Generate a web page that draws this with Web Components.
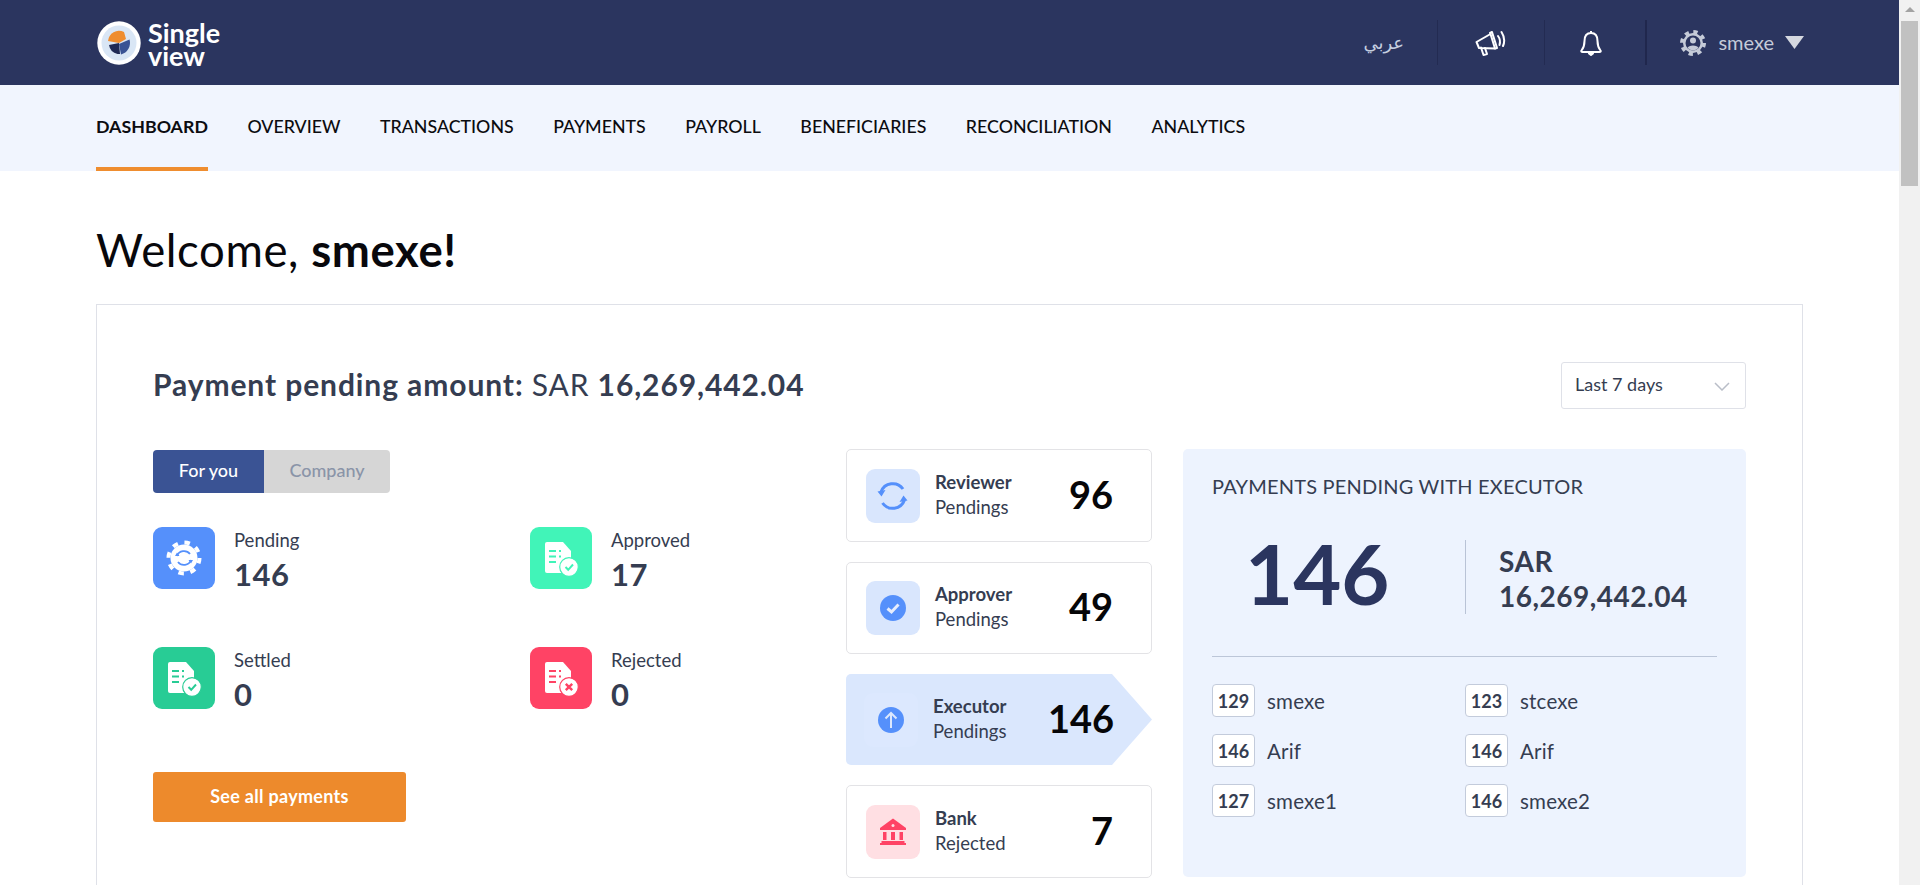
<!DOCTYPE html>
<html lang="en">
<head>
<meta charset="utf-8">
<title>Single view</title>
<style>
  html, body { margin: 0; height: 100%; overflow: hidden; background: #fff; }
  body { font-family: Lato, "Liberation Sans", sans-serif; color: #353d51; }
</style>
</head>
<body>
<sv-page>
  <sv-header slot="header" user="smexe"></sv-header>
  <sv-nav slot="nav" active="DASHBOARD" items="DASHBOARD,OVERVIEW,TRANSACTIONS,PAYMENTS,PAYROLL,BENEFICIARIES,RECONCILIATION,ANALYTICS"></sv-nav>
  <sv-welcome name="smexe!"></sv-welcome>
  <sv-card>
    <sv-summary slot="title" amount="16,269,442.04" period="Last 7 days"></sv-summary>
    <sv-toggle slot="left" on="For you" off="Company"></sv-toggle>
    <div slot="left" style="display:grid;grid-template-columns:377px 1fr;row-gap:58px;margin-top:34px">
      <sv-stat icon="gear" color="#5590fb" label="Pending" value="146"></sv-stat>
      <sv-stat icon="doc-check" color="#41f4b8" label="Approved" value="17"></sv-stat>
      <sv-stat icon="doc-check" color="#28cc95" label="Settled" value="0"></sv-stat>
      <sv-stat icon="doc-cross" color="#ff4365" label="Rejected" value="0"></sv-stat>
    </div>
    <sv-button slot="left" style="margin-top:63px">See all payments</sv-button>

    <sv-role slot="middle" icon="sync" role="Reviewer" sub="Pendings" value="96" style="height:93px"></sv-role>
    <sv-role slot="middle" icon="check" role="Approver" sub="Pendings" value="49" style="height:92px"></sv-role>
    <sv-role slot="middle" icon="up" role="Executor" sub="Pendings" value="146" active style="height:91px"></sv-role>
    <sv-role slot="middle" icon="bank" role="Bank" sub="Rejected" value="7" danger style="height:93px"></sv-role>

    <sv-panel slot="right" heading="PAYMENTS PENDING WITH EXECUTOR" count="146" amount="16,269,442.04">
      <sv-person count="129" name="smexe"></sv-person>
      <sv-person count="123" name="stcexe"></sv-person>
      <sv-person count="146" name="Arif"></sv-person>
      <sv-person count="146" name="Arif"></sv-person>
      <sv-person count="127" name="smexe1"></sv-person>
      <sv-person count="146" name="smexe2"></sv-person>
    </sv-panel>
  </sv-card>
</sv-page>

<script>
const FONT = 'Lato, "Liberation Sans", sans-serif';

class Page extends HTMLElement {
  constructor () {
    super();
    this.attachShadow({ mode: 'open' });
    this.shadowRoot.innerHTML = `
    <style>
      :host { display: flex; height: 885px; overflow: hidden; font-family: ${FONT}; }
      .main { flex: 1; min-width: 0; overflow: hidden; }
      .content { padding: 0 96px; }
      .bar { width: 21px; flex: none; background: #f1f1f1; display: flex; flex-direction: column; align-items: center; }
      .up { width: 0; height: 0; border: 5px solid transparent; border-top: 0; border-bottom-color: #a3a3a3; margin: 7px 0 9px; }
      .thumb { width: 17px; height: 165px; background: #c1c1c1; }
    </style>
    <div class="main">
      <slot name="header"></slot>
      <slot name="nav"></slot>
      <div class="content"><slot></slot></div>
    </div>
    <div class="bar"><div class="up"></div><div class="thumb"></div></div>
    `;
  }
}

class Header extends HTMLElement {
  constructor () {
    super();
    this.attachShadow({ mode: 'open' });
  }

  connectedCallback () {
    this.shadowRoot.innerHTML = `
    <style>
      :host { display: flex; align-items: center; height: 85px; background: #2b355f; padding: 0 95px 0 96px; }
      .logo { display: flex; align-items: center; gap: 6px; flex: 1; }
      .word { color: #fff; font-weight: 700; font-size: 27px; line-height: 23px; margin-top: 3px; }
      .cell { height: 45px; display: flex; align-items: center; justify-content: center; border-right: 1px solid #232b52; }
      .lang { width: 104px; justify-content: flex-start; color: #c5cfe0; font: 18px "DejaVu Sans", sans-serif; }
      .lang span { margin-left: 30px; }
      .cell svg { display: block; }
      .speak { width: 106px; }
      .bell { width: 100px; border-right: 2px solid #20274d; }
      .bell svg { margin-right: 8px; }
      .user { display: flex; align-items: center; padding-left: 33px; color: #c5cbd8; font-size: 20px; }
      .user span { margin: -2px 11px 0 12px; }
    </style>
    <div class="logo">
      <svg width="46" height="46" viewBox="0 0 46 46">
        <circle cx="23" cy="23" r="21.700" fill="#fff"/>
        <circle cx="23" cy="23" r="17.500" fill="#d9e6f5"/>
        <path d="M23 23 L13 25 A11 11 0 0 0 21.500 34 L24 34 Z" fill="#1f2a55"/>
        <path d="M23 23 L12 21 A11 11 0 0 1 28 12 L30 19 Z" fill="#ef8d2f"/>
        <path d="M23 24 L33.500 19.500 A12 12 0 0 1 25 34.500 Z" fill="#3a5394"/>
      </svg>
      <div class="word">Single<br>view</div>
    </div>
    <div class="cell lang"><span lang="ar" dir="rtl">عربي</span></div>
    <div class="cell speak">
      <svg width="32" height="28" viewBox="0 0 32 28" fill="none" stroke="#fff" stroke-width="2" stroke-linejoin="round" stroke-linecap="round">
        <path d="M1.500 13 L4 19 L20 19.500 L15.500 5 Z"/>
        <path d="M6 18.500 L8.500 26 L12 25 L10 19"/>
        <path d="M15 4 L17 3 L22 19 L20 19.500"/>
        <path d="M23 7 Q26 11 24.500 16"/>
        <path d="M26.500 3 Q31 10 28 17"/>
      </svg>
    </div>
    <div class="cell bell">
      <svg width="22" height="26" viewBox="0 0 22 26" fill="none" stroke="#fff" stroke-width="2" stroke-linejoin="round">
        <path d="M11 1 V3 M11 3 C6 3 4.500 7 4.500 11 C4.500 16 3.500 18 1.500 20.500 C1 21.500 1.500 22 2.500 22 H19.500 C20.500 22 21 21.500 20.500 20.500 C18.500 18 17.500 16 17.500 11 C17.500 7 16 3 11 3 Z"/>
        <path d="M9 23.500 H13 L11 25 Z" fill="#fff"/>
      </svg>
    </div>
    <div class="user">
      <svg width="26" height="26" viewBox="0 0 26 26">
        <circle cx="13" cy="13" r="10" fill="#c5cbd8"/>
        <circle cx="13" cy="13" r="11" fill="none" stroke="#c5cbd8" stroke-width="4" stroke-dasharray="4.200 4.440"/>
        <circle cx="13" cy="13" r="7.500" fill="#2b355f"/>
        <circle cx="13" cy="10.500" r="3" fill="#c5cbd8"/>
        <path d="M7.500 18 C8 14.500 18 14.500 18.500 18 A7.500 7.500 0 0 1 7.500 18 Z" fill="#c5cbd8"/>
      </svg>
      <span>${this.getAttribute('user')}</span>
      <svg width="19" height="13" viewBox="0 0 19 13"><path d="M0 0 H19 L9.500 13 Z" fill="#d5d8e0"/></svg>
    </div>
    `;
  }
}

class Nav extends HTMLElement {
  constructor () {
    super();
    this.attachShadow({ mode: 'open' });
  }

  connectedCallback () {
    const active = this.getAttribute('active');
    const links = this.getAttribute('items').split(',')
      .map(item => `<a class="${item === active ? 'on' : ''}">${item}</a>`)
      .join('');
    this.shadowRoot.innerHTML = `
    <style>
      :host { display: flex; gap: 39.500px; height: 86px; background: #f1f5fe; padding-left: 96px; }
      a { display: flex; align-items: center; box-sizing: border-box; height: 86px; padding-bottom: 4px; font-size: 17.800px; font-weight: 500; color: #0c0c10; }
      .on { font-weight: 700; border-bottom: 4px solid #ef8d2f; padding-bottom: 0; }
    </style>
    ${links}
    `;
  }
}

class Welcome extends HTMLElement {
  constructor () {
    super();
    this.attachShadow({ mode: 'open' });
  }

  connectedCallback () {
    this.shadowRoot.innerHTML = `
    <style>
      :host { display: block; padding-top: 52px; height: 81px; font-size: 45.500px; letter-spacing: .6px; line-height: 54px; color: #08080c; font-weight: 400; }
      b { font-weight: 700; }
    </style>
    Welcome, <b>${this.getAttribute('name')}</b>
    `;
  }
}

class Card extends HTMLElement {
  constructor () {
    super();
    this.attachShadow({ mode: 'open' });
    this.shadowRoot.innerHTML = `
    <style>
      :host { display: block; border: 1px solid #dfe1e8; padding: 57px 56px 40px 56px; background: #fff; }
      .cols { display: grid; grid-template-columns: 662px 306px 563px; column-gap: 31px; margin-top: 40px; }
      .left { padding-top: 1px; }
      .middle { display: flex; flex-direction: column; gap: 20px; }
    </style>
    <slot name="title"></slot>
    <div class="cols">
      <div class="left"><slot name="left"></slot></div>
      <div class="middle"><slot name="middle"></slot></div>
      <div><slot name="right"></slot></div>
    </div>
    `;
  }
}

class Summary extends HTMLElement {
  constructor () {
    super();
    this.attachShadow({ mode: 'open' });
  }

  connectedCallback () {
    this.shadowRoot.innerHTML = `
    <style>
      :host { display: flex; justify-content: space-between; align-items: center; height: 47px; }
      h2 { margin: -4px 0 0; font-size: 30px; letter-spacing: .9px; font-weight: 700; color: #353d51; }
      span { font-weight: 400; }
      .select { box-sizing: border-box; width: 185px; height: 47px; border: 1px solid #dfe1e8; border-radius: 3px; display: flex; align-items: center; justify-content: space-between; padding: 0 15px 4px 13px; font-size: 18px; color: #353d51; }
      svg { margin-top: 5px; }
    </style>
    <h2>Payment pending amount: <span>SAR</span> ${this.getAttribute('amount')}</h2>
    <div class="select">${this.getAttribute('period')}
      <svg width="16" height="9" viewBox="0 0 16 9" fill="none" stroke="#b9bec8" stroke-width="1.500"><path d="M1 1 L8 8 L15 1"/></svg>
    </div>
    `;
  }
}

class Toggle extends HTMLElement {
  constructor () {
    super();
    this.attachShadow({ mode: 'open' });
  }

  connectedCallback () {
    this.shadowRoot.innerHTML = `
    <style>
      :host { display: inline-flex; vertical-align: top; height: 43px; font-size: 18px; font-weight: 500; border-radius: 4px; overflow: hidden; }
      div { display: flex; align-items: center; justify-content: center; padding-bottom: 3px; box-sizing: border-box; }
      .on { width: 111px; background: #3a5394; color: #fff; }
      .off { width: 126px; background: #d6d6d6; color: #8a94a8; }
    </style>
    <div class="on">${this.getAttribute('on')}</div>
    <div class="off">${this.getAttribute('off')}</div>
    `;
  }
}

const tileIcons = {
  gear: (c) => `
    <circle cx="31" cy="31" r="13.500" fill="#fff"/>
    <circle cx="31" cy="31" r="15.500" fill="none" stroke="#fff" stroke-width="4" stroke-dasharray="5.500 6.670"/>
    <g fill="none" stroke="${c}" stroke-width="1.800">
      <path d="M24 29 A7.500 7.500 0 0 1 37 27"/>
      <path d="M38 33 A7.500 7.500 0 0 1 25 35"/>
    </g>
    <path d="M22 29 L26.500 29 L24 25.500 Z M40 33 L35.500 33 L38 36.500 Z" fill="${c}"/>`,
  doc: (c) => `
    <path d="M17 15 H33 L41 24 V44 Q41 46 39 46 H17 Q15 46 15 44 V17 Q15 15 17 15 Z" fill="#fff"/>
    <path d="M19 24 H26 M29 24 H31 M19 29.500 H26 M29 29.500 H31 M19 35 H26" stroke="${c}" stroke-width="1.800" fill="none"/>
    <circle cx="39" cy="40" r="9.300" fill="#fff" stroke="${c}" stroke-width="1.200"/>`
};
tileIcons['doc-check'] = (c) => `${tileIcons.doc(c)}
    <circle cx="39" cy="40" r="7.800" fill="#fff"/>
    <path d="M35.500 40 L38.200 42.800 L43 37.500" fill="none" stroke="${c}" stroke-width="2"/>`;
tileIcons['doc-cross'] = (c) => `${tileIcons.doc(c)}
    <path d="M35.800 36.800 L42.200 43.200 M42.200 36.800 L35.800 43.200" fill="none" stroke="${c}" stroke-width="2.400"/>`;

class Stat extends HTMLElement {
  constructor () {
    super();
    this.attachShadow({ mode: 'open' });
  }

  connectedCallback () {
    const color = this.getAttribute('color');
    this.shadowRoot.innerHTML = `
    <style>
      :host { display: flex; gap: 19px; height: 62px; }
      svg { display: block; width: 62px; height: 62px; border-radius: 9px; background: ${color}; flex: none; }
      .label { font-size: 18.500px; line-height: 24px; color: #353d51; margin-top: 1px; }
      .value { font-size: 31px; letter-spacing: .5px; line-height: 38px; font-weight: 700; color: #353d51; margin-top: 3px; }
    </style>
    <svg viewBox="0 0 62 62">${tileIcons[this.getAttribute('icon')](color)}</svg>
    <div>
      <div class="label">${this.getAttribute('label')}</div>
      <div class="value">${this.getAttribute('value')}</div>
    </div>
    `;
  }
}

class Button extends HTMLElement {
  constructor () {
    super();
    this.attachShadow({ mode: 'open' });
    this.shadowRoot.innerHTML = `
    <style>
      :host { display: flex; align-items: center; justify-content: center; box-sizing: border-box; width: 253px; height: 50px; padding-bottom: 2px; background: #ed8a2c; border-radius: 3px; color: #fff; font-size: 18px; letter-spacing: .3px; font-weight: 700; }
    </style>
    <slot></slot>
    `;
  }
}

const roleIcons = {
  sync: `<g fill="none" stroke="#5590fb" stroke-width="3">
      <path d="M15 23 A12.500 12.500 0 0 1 37 20"/>
      <path d="M38.500 31 A12.500 12.500 0 0 1 16.500 34"/>
    </g>
    <path d="M11.500 22.500 L19.500 21 L15.500 27.500 Z M41.500 31.500 L33.500 33 L37.500 26.500 Z" fill="#5590fb"/>`,
  check: `<circle cx="27" cy="27" r="13" fill="#5590fb"/>
    <path d="M21.500 27.500 L25.500 31 L32.500 23.500" fill="none" stroke="#e6edfd" stroke-width="3"/>`,
  up: `<circle cx="27" cy="27" r="13" fill="#5590fb"/>
    <path d="M27 35 V20 M21.500 25.500 L27 20 L32.500 25.500" fill="none" stroke="#dbe7fd" stroke-width="2"/>`,
  bank: `<path d="M27 13.500 L40 23 V25 H14 V23 Z" fill="#ff4365"/>
    <circle cx="27" cy="20.500" r="1.500" fill="#ffdfe3"/>
    <path d="M17 27 H20.500 V35 H17 Z M25 27 H29 V35 H25 Z M33.500 27 H37 V35 H33.500 Z M15.500 36 H38.500 V38 H15.500 Z M14 38 H40 V40 H14 Z" fill="#ff4365"/>`
};

class Role extends HTMLElement {
  constructor () {
    super();
    this.attachShadow({ mode: 'open' });
  }

  connectedCallback () {
    const active = this.hasAttribute('active');
    const danger = this.hasAttribute('danger');
    const bg = danger ? '#ffdfe3' : active ? '#dce8fe' : '#d9e6fd';
    this.shadowRoot.innerHTML = `
    <style>
      :host { display: block; }
      .box { box-sizing: border-box; height: 100%; display: flex; align-items: center; padding: 0 38px 0 19px; border: 1px solid #e3e3e6; border-radius: 5px; }
      .active { border: 0; background: #dae7fd; padding: 0 38px 0 18px; clip-path: polygon(0 0, 266px 0, 100% 50%, 266px 100%, 0 100%); }
      svg { display: block; width: 54px; height: 54px; flex: none; background: ${bg}; border-radius: 9px; margin-right: 15px; }
      .text { flex: 1; font-size: 18.500px; line-height: 25px; color: #353d51; margin-top: -2px; }
      b { display: block; font-weight: 700; }
      .num { font-size: 38px; font-weight: 700; color: #060608; margin-top: -4px; }
    </style>
    <div class="box ${active ? 'active' : ''}">
      <svg viewBox="0 0 54 54">${roleIcons[this.getAttribute('icon')]}</svg>
      <div class="text"><b>${this.getAttribute('role')}</b>${this.getAttribute('sub')}</div>
      <div class="num">${this.getAttribute('value')}</div>
    </div>
    `;
  }
}

class Panel extends HTMLElement {
  constructor () {
    super();
    this.attachShadow({ mode: 'open' });
  }

  connectedCallback () {
    this.shadowRoot.innerHTML = `
    <style>
      :host { display: block; box-sizing: border-box; height: 428px; background: #edf3fe; border-radius: 5px; padding: 25px 29px 0 29px; color: #353d51; }
      h3 { margin: 0; font-size: 20px; letter-spacing: .2px; line-height: 24px; font-weight: 400; }
      .top { display: grid; grid-template-columns: 253px 1fr; height: 73px; margin-top: 42px; }
      .big { font-size: 83px; line-height: 67px; font-weight: 700; color: #2b355f; padding-left: 33px; }
      .sum { border-left: 1px solid #b9c3d6; padding-left: 33px; font-size: 28px; letter-spacing: .5px; line-height: 35px; font-weight: 700; padding-top: 4px; }
      .rows { display: grid; grid-template-columns: 253px 1fr; row-gap: 17px; border-top: 1px solid #bcc6d8; margin-top: 43px; padding-top: 27px; }
    </style>
    <h3>${this.getAttribute('heading')}</h3>
    <div class="top">
      <div class="big">${this.getAttribute('count')}</div>
      <div class="sum">SAR<br>${this.getAttribute('amount')}</div>
    </div>
    <div class="rows"><slot></slot></div>
    `;
  }
}

class Person extends HTMLElement {
  constructor () {
    super();
    this.attachShadow({ mode: 'open' });
  }

  connectedCallback () {
    this.shadowRoot.innerHTML = `
    <style>
      :host { display: flex; align-items: center; gap: 12px; height: 33px; font-size: 20.500px; letter-spacing: .2px; color: #353d51; }
      .n { box-sizing: border-box; width: 43px; height: 33px; background: #fff; border: 1px solid #c3cbdb; border-radius: 4px; display: flex; align-items: center; justify-content: center; font-size: 18px; letter-spacing: 0; font-weight: 700; }
    </style>
    <div class="n">${this.getAttribute('count')}</div>
    <div>${this.getAttribute('name')}</div>
    `;
  }
}

customElements.define('sv-page', Page);
customElements.define('sv-header', Header);
customElements.define('sv-nav', Nav);
customElements.define('sv-welcome', Welcome);
customElements.define('sv-card', Card);
customElements.define('sv-summary', Summary);
customElements.define('sv-toggle', Toggle);
customElements.define('sv-stat', Stat);
customElements.define('sv-button', Button);
customElements.define('sv-role', Role);
customElements.define('sv-panel', Panel);
customElements.define('sv-person', Person);
</script>
</body>
</html>
